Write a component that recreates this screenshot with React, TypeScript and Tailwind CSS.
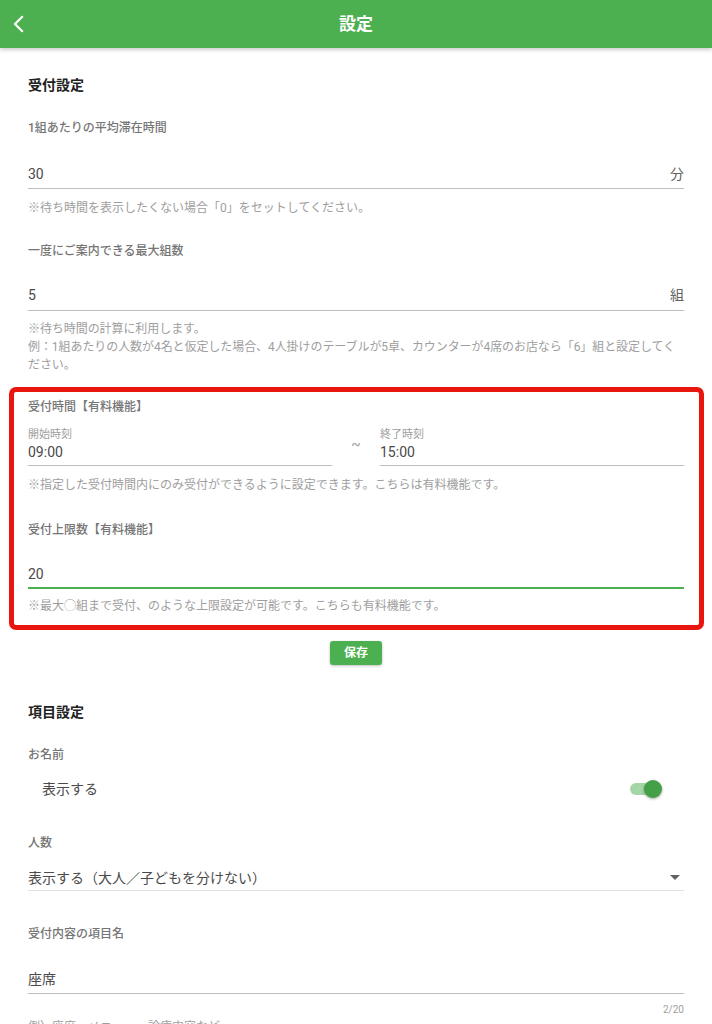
export default function App() {
  return (
    <div className="min-h-screen bg-white font-[Roboto,'Noto_Sans_CJK_JP',sans-serif]">
      <header className="relative h-12 bg-[#4caf50] shadow-[0_2px_4px_rgba(0,0,0,0.2)] flex items-center justify-center">
        <svg className="absolute left-[12px] top-[15px]" width="14" height="18" viewBox="0 0 14 18" fill="none">
          <polyline points="10,2 3,9 10,16" stroke="white" strokeWidth="2.2" strokeLinecap="square" />
        </svg>
        <h1 className="text-white text-[17px] font-bold leading-6">設定</h1>
      </header>

      <main className="px-7 pb-6">
        <h2 className="mt-[27px] text-[14px] leading-5 font-bold text-[#212121]">受付設定</h2>

        <p className="mt-[25px] text-[12px] leading-4 font-medium text-[#757575]">1組あたりの平均滞在時間</p>
        <div className="mt-[28px] flex justify-between pb-[4px] border-b border-[#bdbdbd] text-[14px] leading-5 text-[#4a4a4a]">
          <span>30</span>
          <span className="text-[#616161]">分</span>
        </div>
        <p className="mt-[10px] text-[12px] leading-[18px] text-[#9e9e9e]">※待ち時間を表示したくない場合「0」をセットしてください。</p>

        <p className="mt-[26px] text-[12px] leading-4 font-medium text-[#757575]">一度にご案内できる最大組数</p>
        <div className="mt-[26px] flex justify-between pb-[5px] border-b border-[#bdbdbd] text-[14px] leading-5 text-[#4a4a4a]">
          <span>5</span>
          <span className="text-[#616161]">組</span>
        </div>
        <p className="mt-[9px] text-[12px] leading-[18px] tracking-[-0.07px] text-[#9e9e9e]">
          ※待ち時間の計算に利用します。
          <br />
          例：1組あたりの人数が4名と仮定した場合、4人掛けのテーブルが5卓、カウンターが4席のお店なら「6」組と設定してください。
        </p>

        <section className="mt-[13px] -ml-[19px] -mr-[20px] border-[5px] border-[#e8160e] rounded-[7px] pl-[14px] pr-[15px] pt-[7px] pb-[10px]">
          <p className="text-[12px] leading-4 font-medium text-[#757575]">受付時間【有料機能】</p>
          <div className="mt-[13px] flex items-start">
            <div className="flex-1 pb-[3px] border-b border-[#bdbdbd]">
              <p className="text-[11px] leading-[14px] text-[#9e9e9e]">開始時刻</p>
              <p className="text-[14px] leading-5 text-[#4a4a4a]">09:00</p>
            </div>
            <div className="w-[48px] pt-[6px] text-center text-[14px] leading-5 text-[#9e9e9e]">~</div>
            <div className="flex-1 pb-[3px] border-b border-[#bdbdbd]">
              <p className="text-[11px] leading-[14px] text-[#9e9e9e]">終了時刻</p>
              <p className="text-[14px] leading-5 text-[#4a4a4a]">15:00</p>
            </div>
          </div>
          <p className="mt-[10px] text-[12px] leading-[18px] text-[#9e9e9e]">※指定した受付時間内にのみ受付ができるように設定できます。こちらは有料機能です。</p>

          <p className="mt-[28px] text-[12px] leading-4 font-medium text-[#757575]">受付上限数【有料機能】</p>
          <div className="mt-[26px] pb-[3px] border-b-2 border-[#4caf50] text-[14px] leading-5 text-[#4a4a4a]">20</div>
          <p className="mt-[8px] text-[12px] leading-[18px] text-[#9e9e9e]">※最大◯組まで受付、のような上限設定が可能です。こちらも有料機能です。</p>
        </section>

        <div className="mt-[11px] flex justify-center">
          <button className="h-[24px] w-[52px] rounded-[3px] bg-[#4caf50] text-white text-[12px] font-bold shadow-[0_1px_3px_rgba(0,0,0,0.25)]">保存</button>
        </div>

        <h2 className="mt-[37px] text-[14px] leading-5 font-bold text-[#212121]">項目設定</h2>

        <p className="mt-[25px] text-[12px] leading-4 font-medium text-[#757575]">お名前</p>
        <div className="mt-[15px] flex items-center justify-between pl-[14px] pr-[22px]">
          <span className="text-[14px] leading-[22px] text-[#4a4a4a]">表示する</span>
          <div className="relative w-[32px] h-[18px] flex items-center">
            <div className="w-[30px] h-[12px] rounded-full bg-[#a5d6a7]" />
            <div className="absolute right-0 top-0 w-[18px] h-[18px] rounded-full bg-[#43a047] shadow-[0_1px_3px_rgba(0,0,0,0.35)]" />
          </div>
        </div>

        <p className="mt-[35px] text-[12px] leading-4 font-medium text-[#757575]">人数</p>
        <div className="mt-[16px] flex items-center justify-between pb-[1px] border-b border-[#e0e0e0]">
          <span className="text-[14px] leading-[22px] text-[#4a4a4a]">表示する（大人／子どもを分けない）</span>
          <svg className="mr-[4px]" width="10" height="6" viewBox="0 0 10 6">
            <polygon points="0,0 10,0 5,5" fill="#616161" />
          </svg>
        </div>

        <p className="mt-[35px] text-[12px] leading-4 font-medium text-[#757575]">受付内容の項目名</p>
        <div className="mt-[26px] pb-[3px] border-b border-[#bdbdbd] text-[14px] leading-[22px] text-[#4a4a4a]">座席</div>
        <p className="mt-[9px] text-right text-[10px] leading-[14px] text-[#9e9e9e]">2/20</p>
        <p className="mt-[1px] text-[12px] leading-[18px] text-[#9e9e9e]">例）座席、メニュー、診療内容など</p>
      </main>
    </div>
  );
}
